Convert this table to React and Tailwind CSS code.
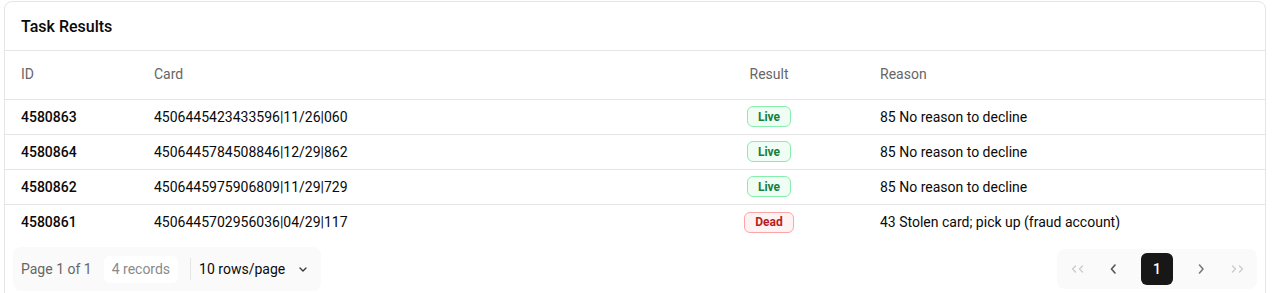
import React from "react";

const rows = [
  { id: "4580863", card: "4506445423433596|11/26|060", result: "Live", reason: "85 No reason to decline" },
  { id: "4580864", card: "4506445784508846|12/29|862", result: "Live", reason: "85 No reason to decline" },
  { id: "4580862", card: "4506445975906809|11/29|729", result: "Live", reason: "85 No reason to decline" },
  { id: "4580861", card: "4506445702956036|04/29|117", result: "Dead", reason: "43 Stolen card; pick up (fraud account)" },
];

function Badge({ value }) {
  if (value === "Live") {
    return (
      <span className="inline-flex items-center h-[21px] px-[10px] rounded-md border border-[#86efac] bg-[#f0fdf4] text-[#15803d] text-xs font-bold">
        Live
      </span>
    );
  }
  return (
    <span className="inline-flex items-center h-[21px] px-[10px] rounded-md border border-[#fca5a5] bg-[#fef2f2] text-[#b91c1c] text-xs font-bold">
      Dead
    </span>
  );
}

function DoubleChevron({ dir }) {
  const d = dir === "left" ? "M4.5 1 L1.5 4 L4.5 7 M11.5 1 L8.5 4 L11.5 7" : "M1.5 1 L4.5 4 L1.5 7 M8.5 1 L11.5 4 L8.5 7";
  return (
    <svg width="13" height="8" viewBox="0 0 13 8" fill="none" stroke="#c8c8c8" strokeWidth="1.2" strokeLinecap="round" strokeLinejoin="round">
      <path d={d} />
    </svg>
  );
}

function Chevron({ dir, color }) {
  const d = dir === "left" ? "M5 1 L1.5 5 L5 9" : "M1.5 1 L5 5 L1.5 9";
  return (
    <svg width="7" height="10" viewBox="0 0 7 10" fill="none" stroke={color} strokeWidth="1.6" strokeLinecap="round" strokeLinejoin="round">
      <path d={d} />
    </svg>
  );
}

export default function App() {
  return (
    <div className="bg-white w-[1272px] h-[293px] overflow-hidden pt-px" style={{ fontFamily: "Roboto, 'Liberation Sans', sans-serif" }}>
      <div className="ml-1 mr-[6px] border border-[#e5e5e5] rounded-lg bg-white h-[320px]">
        <div className="h-[49px] px-4 flex items-center border-b border-[#e5e5e5]">
          <h2 className="text-base font-medium text-[#0a0a0a] pt-px">Task Results</h2>
        </div>
        <table className="w-full table-fixed border-collapse text-sm">
          <colgroup>
            <col className="w-[133px]" />
            <col className="w-[536px]" />
            <col className="w-[190px]" />
            <col />
          </colgroup>
          <thead>
            <tr className="h-[48px] border-b border-[#e5e5e5]">
              <th className="px-4 pb-px text-left font-normal text-[#666666]">ID</th>
              <th className="px-4 pb-px text-left font-normal text-[#666666]">Card</th>
              <th className="px-4 pb-px text-center font-normal text-[#666666]">Result</th>
              <th className="px-4 pb-px text-left font-normal text-[#666666]">Reason</th>
            </tr>
          </thead>
          <tbody>
            {rows.map((r, i) => (
              <tr key={r.id} className={i < rows.length - 1 ? "h-[35px] border-b border-[#e5e5e5]" : "h-[35px]"}>
                <td className="px-4 font-medium text-[#0a0a0a]">{r.id}</td>
                <td className="px-4 text-[#0a0a0a]">{r.card}</td>
                <td className="px-4 text-center">
                  <Badge value={r.result} />
                </td>
                <td className="px-4 text-[#0a0a0a]">{r.reason}</td>
              </tr>
            ))}
          </tbody>
        </table>
        <div className="flex items-center justify-between px-2 pt-2">
          <div className="h-[44px] flex items-center rounded-lg bg-[#fafafa] pl-2 pr-[14px] text-sm">
            <span className="text-[#666666]">Page 1 of 1</span>
            <span className="ml-3 h-[27px] px-2 flex items-center rounded-md bg-white text-[#8a8a8a]">4 records</span>
            <span className="ml-3 w-px h-[22px] bg-[#e5e5e5]" />
            <span className="ml-2 text-[#0a0a0a]">10 rows/page</span>
            <svg className="ml-[14px]" width="8" height="5" viewBox="0 0 8 5" fill="none" stroke="#333" strokeWidth="1.3" strokeLinecap="round" strokeLinejoin="round">
              <path d="M1 1 L4 4 L7 1" />
            </svg>
          </div>
          <div className="h-[40px] flex items-center gap-1 p-1 rounded-lg bg-[#fafafa]">
            <button className="w-8 h-8 flex items-center justify-center">
              <DoubleChevron dir="left" />
            </button>
            <button className="w-8 h-8 flex items-center justify-center">
              <Chevron dir="left" color="#555555" />
            </button>
            <button className="mx-2 w-8 h-8 flex items-center justify-center rounded-md bg-[#171717] text-white text-sm font-medium">
              1
            </button>
            <button className="w-8 h-8 flex items-center justify-center">
              <Chevron dir="right" color="#7a7a7a" />
            </button>
            <button className="w-8 h-8 flex items-center justify-center">
              <DoubleChevron dir="right" />
            </button>
          </div>
        </div>
      </div>
    </div>
  );
}
